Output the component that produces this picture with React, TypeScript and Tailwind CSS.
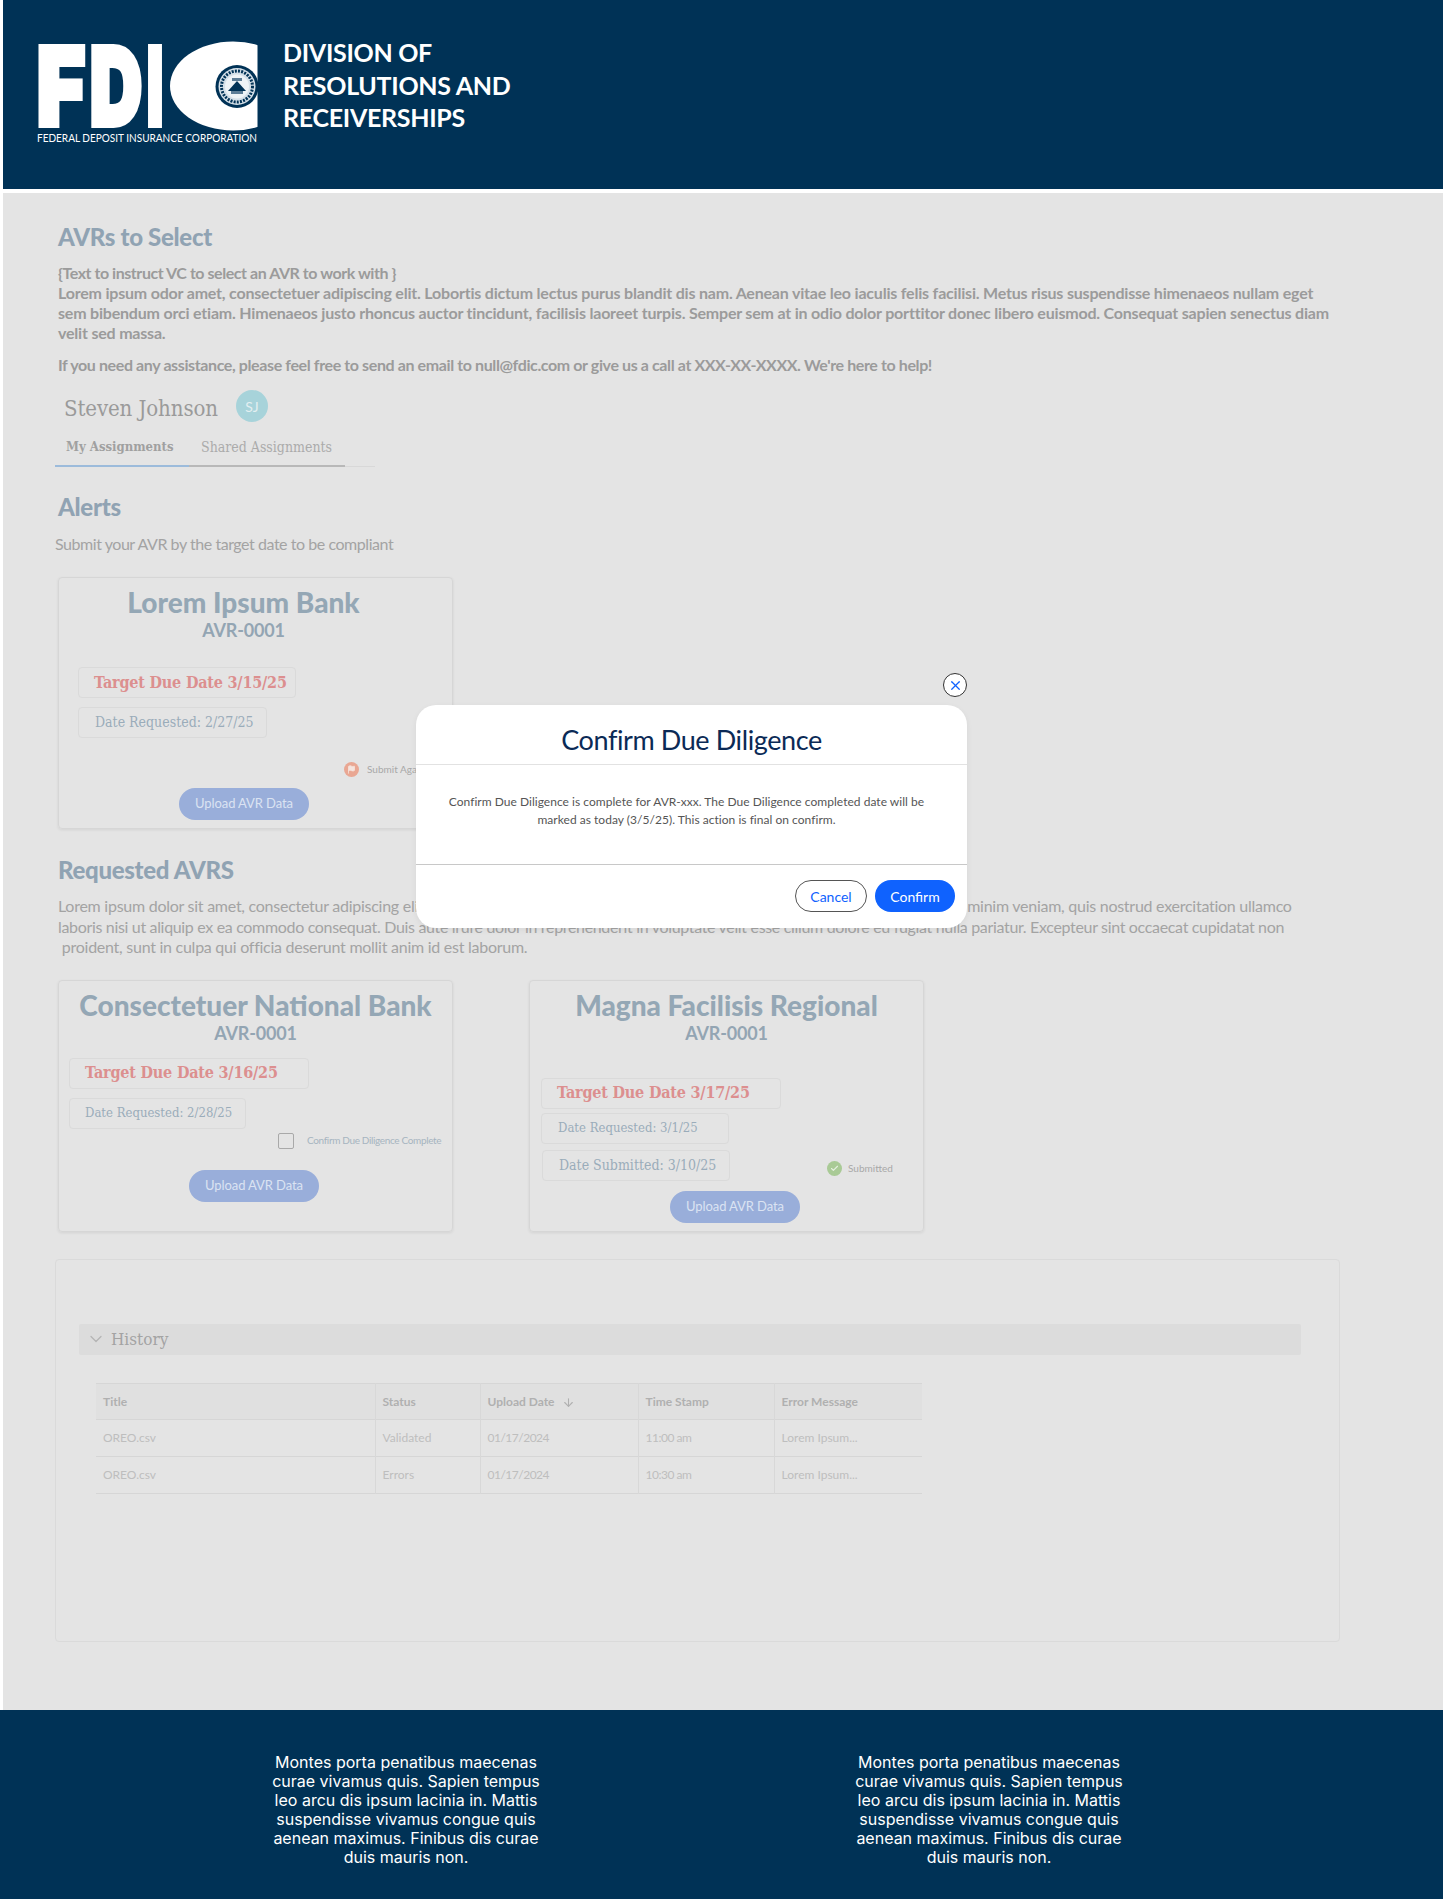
import { ArrowDown, Check, ChevronDown, Flag, X } from 'lucide-react';
import type { ReactNode } from 'react';

const SANS = 'font-["Lato","Noto_Sans",sans-serif]';
const SERIF = 'font-["DejaVu_Serif_Condensed","DejaVu_Serif",serif]';

const Logo = () => (
  <svg width="225" height="108" viewBox="35 40 225 108" className="shrink-0" aria-label="FDIC logo">
    <defs>
      <clipPath id="c-clip">
        <rect x="165" y="38" width="92.5" height="96" />
      </clipPath>
    </defs>
    <g fill="#fff" fontFamily="Inter, sans-serif" fontWeight="900" fontSize="107" stroke="#fff" strokeWidth="6" strokeLinejoin="miter">
      <text x="37" y="125" textLength="48" lengthAdjust="spacingAndGlyphs">F</text>
      <text x="90" y="125" textLength="52" lengthAdjust="spacingAndGlyphs">D</text>
      <text x="147" y="125" textLength="16" lengthAdjust="spacingAndGlyphs">I</text>
    </g>
    <g clipPath="url(#c-clip)">
      <ellipse cx="233" cy="86" rx="63" ry="44.5" fill="#fff" />
    </g>
    <circle cx="237" cy="86.5" r="21.5" fill="#003256" />
    <circle cx="237" cy="86.5" r="18.5" fill="#d5e0e8" />
    <circle cx="237" cy="86.5" r="15.5" fill="none" stroke="#003256" strokeWidth="3" strokeDasharray="2 1.2" />
    <circle cx="237" cy="86.5" r="12" fill="#eef3f6" />
    <path d="M228 91l9-10 9 10z" fill="#003256" />
    <path d="M231 91h12v3h-12z" fill="#5d7d96" />
    <path d="M232 78h10v3h-10z" fill="#5d7d96" />
    <text x="37" y="141.5" fill="#fff" fontFamily="Lato, sans-serif" fontSize="12" textLength="220" lengthAdjust="spacingAndGlyphs">
      FEDERAL DEPOSIT INSURANCE CORPORATION
    </text>
  </svg>
);

const Card = ({ className = '', children }: { className?: string; children: ReactNode }) => (
  <div className={`w-[395px] shrink-0 rounded border border-[#d6d6d6] shadow-[0_1px_3px_rgba(0,0,0,0.08)] ${className}`}>
    {children}
  </div>
);

const CardTitle = ({ title, className = '' }: { title: string; className?: string }) => (
  <div className={`pt-[9px] text-center ${className}`}>
    <div className="leading-[31px] text-[28px] font-black text-[#94a7b5] whitespace-nowrap">{title}</div>
    <div className="text-[18px] leading-[24px] font-bold text-[#93a5b3] tracking-[-0.2px]">AVR-0001</div>
  </div>
);

const DateBox = ({ className, children }: { className: string; children: ReactNode }) => (
  <div className={`${SERIF} h-[31px] flex items-center rounded border border-[#dadada] whitespace-nowrap ${className}`}>
    {children}
  </div>
);

const TargetText = 'text-[16px] font-bold tracking-[-0.2px] text-[#dc8f8f]';

const UploadButton = ({ className }: { className: string }) => (
  <div className={`w-[130px] h-[32px] flex items-center justify-center rounded-full bg-[#99aeda] text-[13px] tracking-[-0.1px] text-[#dbe3f2] ${className}`}>
    Upload AVR Data
  </div>
);

const App = () => (
  <div className={`${SANS} relative w-[1443px] h-[1899px] bg-white overflow-hidden`}>
    <header className="ml-[3px] h-[189px] bg-[#003256] flex pl-[32px] pt-[40px]">
      <Logo />
      <div className="ml-[23px] -mt-[4px] text-[25px] leading-[32.5px] font-bold text-white tracking-[-0.3px] whitespace-nowrap">
        DIVISION OF<br />RESOLUTIONS AND<br />RECEIVERSHIPS
      </div>
    </header>

    <main className="ml-[3px] mt-[4px] h-[1517px] bg-[#e4e4e4] pl-[52px] pt-[29px]">
      <h2 className="ml-[3px] text-[24px] leading-[30px] font-black tracking-[-0.3px] text-[#90a3b3]">AVRs to Select</h2>
      <p className="ml-[3px] mt-[11px] text-[16px] leading-[20px] font-bold tracking-[-0.2px] text-[#9b9b9b] whitespace-nowrap">
        <span className="tracking-[-0.45px]">{'{Text to instruct VC to select an AVR to work with }'}</span><br />
        Lorem ipsum odor amet, consectetuer adipiscing elit. Lobortis dictum lectus purus blandit dis nam. Aenean vitae leo iaculis felis facilisi. Metus risus suspendisse himenaeos nullam eget<br />
        sem bibendum orci etiam. Himenaeos justo rhoncus auctor tincidunt, facilisis laoreet turpis. Semper sem at in odio dolor porttitor donec libero euismod. Consequat sapien senectus diam<br />
        velit sed massa.
      </p>
      <p className="ml-[3px] mt-[12px] text-[16px] leading-[20px] font-bold tracking-[-0.39px] text-[#9b9b9b] whitespace-nowrap">
        If you need any assistance, please feel free to send an email to null@fdic.com or give us a call at XXX-XX-XXXX. We're here to help!
      </p>

      <div className="mt-[15px] h-[32px] flex">
        <span className={`${SERIF} ml-[9px] mt-[4px] w-[172px] text-[22px] leading-[30px] tracking-[-0.1px] text-[#9a9a9a] whitespace-nowrap`}>Steven Johnson</span>
        <span className="w-[32px] h-[32px] rounded-full bg-[#a7d3da] flex items-center justify-center text-[14px] text-[#e3eff1]">SJ</span>
      </div>

      <div className="mt-[2px] h-[43px] w-[320px] flex items-end border-b border-[#d8d8d8]">
        <div className={`${SERIF} w-[134px] h-[43px] -mb-px pl-[11px] pt-[14px] text-[13px] leading-[18px] font-bold text-[#a0a0a0] whitespace-nowrap border-b-2 border-[#9cbbdb]`}>My Assignments</div>
        <div className={`${SERIF} w-[156px] h-[43px] -mb-px pl-[12px] pt-[14px] text-[14px] leading-[18px] text-[#ababab] whitespace-nowrap border-b-2 border-[#b8b8b8]`}>Shared Assignments</div>
      </div>

      <h2 className="ml-[3px] mt-[25px] text-[24px] leading-[30px] font-black tracking-[-0.3px] text-[#90a3b3]">Alerts</h2>
      <p className="mt-[12px] text-[16px] leading-[20px] tracking-[-0.45px] text-[#a3a3a3]">Submit your AVR by the target date to be compliant</p>

      <Card className="ml-[3px] mt-[23px] h-[252px]">
        <CardTitle title="Lorem Ipsum Bank" className="pr-[24px]" />
        <DateBox className={`mt-[25px] ml-[19px] w-[218px] pl-[15px] ${TargetText}`}>Target Due Date 3/15/25</DateBox>
        <DateBox className="mt-[9px] ml-[19px] w-[189px] pl-[16px] text-[14px] text-[#9aacba]">Date Requested: 2/27/25</DateBox>
        <div className="mt-[23px] ml-[285px] h-[16px] flex items-center">
          <span className="w-[15px] h-[15px] rounded-full bg-[#e9a793] flex items-center justify-center">
            <Flag className="w-[9px] h-[9px] text-[#f5e4de] fill-[#f5e4de]" />
          </span>
          <span className="ml-[8px] text-[10px] text-[#a8a8a8] whitespace-nowrap">Submit Again</span>
        </div>
        <UploadButton className="mt-[11px] ml-[120px]" />
      </Card>

      <h2 className="ml-[3px] mt-[26px] text-[24px] leading-[30px] font-black tracking-[-0.3px] text-[#90a3b3]">Requested AVRS</h2>
      <p className="ml-[3px] mt-[11px] text-[16px] leading-[20.5px] tracking-[-0.26px] text-[#a3a3a3] whitespace-nowrap">
        Lorem ipsum dolor sit amet, consectetur adipiscing elit, sed do eiusmod tempor incididunt ut labore et dolore magna aliqua. Ut enim ad minim veniam, quis nostrud exercitation ullamco<br />
        <span className="tracking-[-0.33px]">laboris nisi ut aliquip ex ea commodo consequat. Duis aute irure dolor in reprehenderit in voluptate velit esse cillum dolore eu fugiat nulla pariatur. Excepteur sint occaecat cupidatat non</span><br />
        &nbsp;proident, sunt in culpa qui officia deserunt mollit anim id est laborum.
      </p>

      <div className="ml-[3px] mt-[22px] flex gap-[76px]">
        <Card className="h-[252px]">
          <CardTitle title="Consectetuer National Bank" />
          <DateBox className={`mt-[13px] ml-[10px] w-[240px] pl-[15px] ${TargetText}`}>Target Due Date 3/16/25</DateBox>
          <DateBox className="mt-[9px] ml-[10px] w-[177px] pl-[15px] text-[13px] text-[#9aacba]">Date Requested: 2/28/25</DateBox>
          <div className="mt-[4px] ml-[219px] h-[16px] flex items-center">
            <span className="w-[16px] h-[16px] rounded-[2px] border border-[#a9a9a9]" />
            <span className="ml-[13px] text-[10px] tracking-[-0.35px] text-[#a6b4c0] whitespace-nowrap">Confirm Due Diligence Complete</span>
          </div>
          <UploadButton className="mt-[21px] ml-[130px]" />
        </Card>

        <Card className="h-[252px]">
          <CardTitle title="Magna Facilisis Regional" />
          <DateBox className={`mt-[33px] ml-[11px] w-[240px] pl-[15px] ${TargetText}`}>Target Due Date 3/17/25</DateBox>
          <DateBox className="mt-[4px] ml-[11px] w-[188px] pl-[16px] text-[13px] text-[#9aacba]">Date Requested: 3/1/25</DateBox>
          <div className="mt-[6px] ml-[12px] flex">
            <DateBox className="w-[188px] pl-[16px] text-[14px] text-[#9aacba]">Date Submitted: 3/10/25</DateBox>
            <div className="ml-[97px] mt-[11px] h-[16px] flex items-center">
              <span className="w-[15px] h-[15px] rounded-full bg-[#a9ca96] flex items-center justify-center">
                <Check className="w-[9px] h-[9px] text-[#e6efe0]" strokeWidth={3} />
              </span>
              <span className="ml-[6px] text-[10px] text-[#a8a8a8] whitespace-nowrap">Submitted</span>
            </div>
          </div>
          <UploadButton className="mt-[10px] ml-[140px]" />
        </Card>
      </div>

      <section className="mt-[27px] w-[1285px] h-[383px] rounded border border-[#dadada] pt-[64px] px-[23px]">
        <div className="w-[1222px] h-[31px] rounded-[2px] bg-[#dcdcdc] flex items-center pl-[7px]">
          <ChevronDown className="w-[20px] h-[20px] text-[#b4b4b4]" strokeWidth={1.5} />
          <span className={`${SERIF} ml-[5px] pt-[2px] text-[17px] text-[#a3a3a3]`}>History</span>
        </div>
        <table className="ml-[17px] mt-[28px] w-[826px] table-fixed border-collapse text-[12px]">
          <colgroup>
            <col className="w-[279px]" />
            <col className="w-[105px]" />
            <col className="w-[158px]" />
            <col className="w-[136px]" />
            <col className="w-[148px]" />
          </colgroup>
          <thead>
            <tr className="h-[36px] bg-[#e0e0e0] border-y border-[#d6d6d6] text-left font-bold text-[#b0b0b0]">
              <th className="pl-[7px] pt-[2px] font-bold">Title</th>
              <th className="pl-[7px] pt-[2px] font-bold border-l border-[#d8d8d8]">Status</th>
              <th className="pl-[7px] pt-[2px] font-bold border-l border-[#d8d8d8]">
                <span className="flex items-center gap-[7px]">Upload Date <ArrowDown className="w-[13px] h-[13px]" /></span>
              </th>
              <th className="pl-[7px] pt-[2px] font-bold border-l border-[#d8d8d8]">Time Stamp</th>
              <th className="pl-[7px] pt-[2px] font-bold border-l border-[#d8d8d8]">Error Message</th>
            </tr>
          </thead>
          <tbody className="text-[#bebebe]">
            {[
              ['OREO.csv', 'Validated', '01/17/2024', '11:00 am', 'Lorem Ipsum...'],
              ['OREO.csv', 'Errors', '01/17/2024', '10:30 am', 'Lorem Ipsum...']
            ].map((row, i) => (
              <tr key={i} className="h-[37px] border-b border-[#d6d6d6]">
                {row.map((cell, j) => (
                  <td key={j} className={`pl-[7px] ${j > 0 ? 'border-l border-[#d8d8d8]' : ''} ${j === 2 || j === 3 ? 'tracking-[-0.5px]' : ''}`}>{cell}</td>
                ))}
              </tr>
            ))}
          </tbody>
        </table>
      </section>
    </main>

    <footer className="h-[189px] bg-[#003256] flex pl-[266px] gap-[303px] pt-[43px] font-['Inter',sans-serif] text-[16px] leading-[19px] text-white text-center">
      {[0, 1].map(i => (
        <p key={i} className="w-[280px]">
          Montes porta penatibus maecenas curae vivamus quis. Sapien tempus leo arcu dis ipsum lacinia in. Mattis suspendisse vivamus congue quis aenean maximus. Finibus dis curae duis mauris non.
        </p>
      ))}
    </footer>

    {/* Confirm modal */}
    <div className="absolute left-[416px] top-[705px] w-[551px] h-[223px] rounded-[20px] bg-white shadow-[0_2px_6px_rgba(0,0,0,0.06)]">
      <button className="absolute -top-[32px] right-0 w-[24px] h-[24px] rounded-full bg-white border border-[#333] flex items-center justify-center">
        <X className="w-[15px] h-[15px] text-[#0f62fe]" strokeWidth={2} />
      </button>
      <div className="h-[60px] border-b border-[#e2e2e2] pt-[16px] text-center text-[27px] leading-[38px] tracking-[-0.4px] text-[#0b2a56]">Confirm Due Diligence</div>
      <div className="h-[100px] border-b border-[#c8c8c8] pt-[28px] pr-[10px] text-center text-[12px] leading-[18px] tracking-[0.03px] text-[#555]">
        Confirm Due Diligence is complete for AVR-xxx. The Due Diligence completed date will be<br />
        marked as today (3/5/25). This action is final on confirm.
      </div>
      <div className="flex justify-end gap-[8px] pt-[15px] pr-[12px] text-[14px]">
        <span className="w-[72px] h-[32px] rounded-full border border-[#555] flex items-center justify-center text-[#0f62fe]">Cancel</span>
        <span className="w-[80px] h-[32px] rounded-full bg-[#0f62fe] flex items-center justify-center text-white">Confirm</span>
      </div>
    </div>
  </div>
);

export default App;
